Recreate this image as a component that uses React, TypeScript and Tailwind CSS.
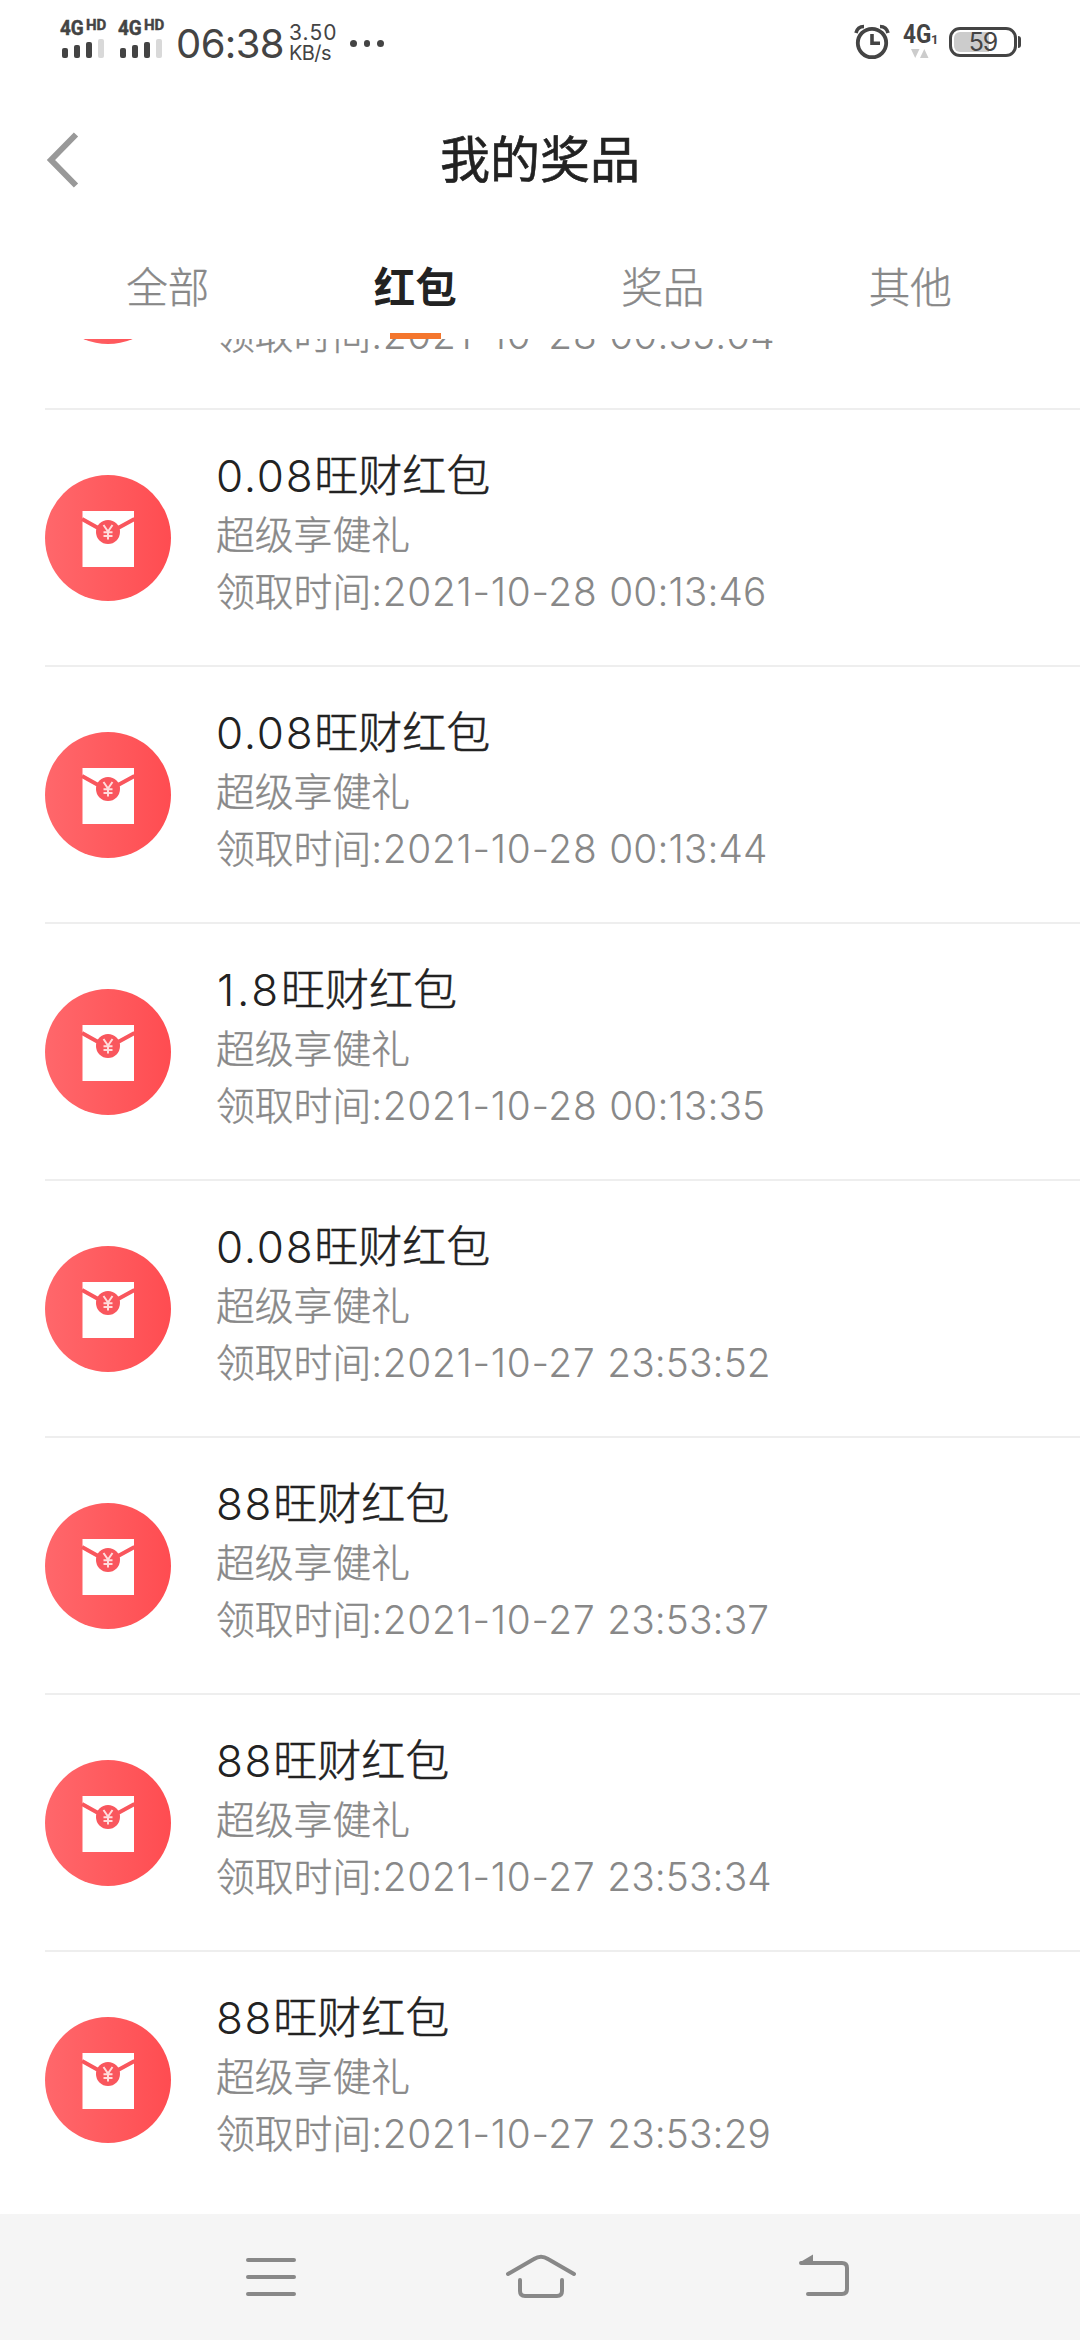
type Prize = { amount: string; date: string; time: string };

const prizes: Prize[] = [
  { amount: "0.08", date: "2021-10-28", time: "00:35:04" },
  { amount: "0.08", date: "2021-10-28", time: "00:13:46" },
  { amount: "0.08", date: "2021-10-28", time: "00:13:44" },
  { amount: "1.8", date: "2021-10-28", time: "00:13:35" },
  { amount: "0.08", date: "2021-10-27", time: "23:53:52" },
  { amount: "88", date: "2021-10-27", time: "23:53:37" },
  { amount: "88", date: "2021-10-27", time: "23:53:34" },
  { amount: "88", date: "2021-10-27", time: "23:53:29" },
];

const tabs = ["全部", "红包", "奖品", "其他"];

function Signal() {
  return (
    <div className="flex h-[38px] w-[46px] flex-col justify-between">
      <div className="flex h-[16px] items-start gap-[2px] whitespace-nowrap font-bold text-[#444]">
        <span className="w-[24px] origin-left scale-x-[.9] font-['Roboto'] text-[21px] leading-[17px] [-webkit-text-stroke:0.5px]">4G</span>
        <span className="font-['Roboto'] text-[15px] leading-[11px] [-webkit-text-stroke:0.4px]">HD</span>
      </div>
      <div className="flex items-end gap-[6px] pl-[2px]">
        <i className="h-[10px] w-[6px] rounded-[2px] bg-[#444]" />
        <i className="h-[13px] w-[6px] rounded-[2px] bg-[#444]" />
        <i className="h-[16px] w-[6px] rounded-[2px] bg-[#444]" />
        <i className="h-[19px] w-[6px] rounded-[2px] bg-[#d9d9d9]" />
      </div>
    </div>
  );
}

function StatusBar() {
  return (
    <div className="flex h-[84px] items-start pl-[60px] text-[#444]">
      <div className="flex gap-[12px] pt-[20px]">
        <Signal />
        <Signal />
      </div>
      <span className="ml-[12px] mt-[24px] w-[113px] whitespace-nowrap text-[40px] leading-[40px] tracking-[-0.6px]">06:38</span>
      <div className="mt-[23px] w-[61px] whitespace-nowrap text-[20px] leading-[20px]">
        <div className="text-[21px] tracking-[1.1px]">3.50</div>
        <div className="tracking-[-0.6px]">KB/s</div>
      </div>
      <div className="mt-[40px] flex gap-[7px]">
        <i className="size-[6.5px] rounded-full bg-[#444]" />
        <i className="size-[6.5px] rounded-full bg-[#444]" />
        <i className="size-[6.5px] rounded-full bg-[#444]" />
      </div>
      <svg className="ml-auto mt-[24px] h-[36px] w-[36px]" viewBox="0 0 36 36" fill="none" stroke="#444">
        <circle cx="18" cy="19" r="14.2" strokeWidth="3.8" />
        <path d="M18 10v9.2h8" strokeWidth="3.6" />
        <path d="M2 9Q3.500 2.500 10 2.500M34 9Q32.500 2.500 26 2.500" strokeWidth="3.600" />
      </svg>
      <div className="ml-[13px] mt-[26px] w-[41px]">
        <div className="flex items-end text-[#444]">
          <span className="w-[28px] origin-left scale-x-[.9] whitespace-nowrap font-['Roboto'] text-[25px] font-bold leading-[18px]">4G</span>
          <span className="font-['Roboto'] text-[13px] font-bold leading-[9px]">1</span>
        </div>
        <svg className="ml-[8px] mt-[5px] h-[9px] w-[18px]" viewBox="0 0 18 9" fill="#ccc">
          <path d="M0 0h8.500L4.200 9zM9 9h8.500L13.300 0z" />
        </svg>
      </div>
      <div className="ml-[5px] mr-[59px] mt-[27px] flex items-center">
        <div className="flex h-[30px] w-[68px] items-center justify-center rounded-[11px] border-[3px] border-[#444] bg-[linear-gradient(90deg,#ccc_37px,transparent_37px)] bg-clip-content p-[2px] text-[25px] leading-[20px] tracking-[-1px]">
          59
        </div>
        <i className="ml-[1px] h-[12px] w-[3px] rounded-r-[3px] bg-[#444]" />
      </div>
    </div>
  );
}

function PacketIcon() {
  return (
    <div className="mt-[65px] flex size-[126px] shrink-0 items-center justify-center rounded-full bg-gradient-to-r from-[#ff676b] to-[#ff4c51]">
      <svg className="size-[126px]" viewBox="0 0 126 126">
        <path d="M37.500 36h51.500v56H37.500z" fill="#fff" />
        <path d="M37 44L63 58.500L89.500 44" fill="none" stroke="#f9565d" strokeWidth="4" />
        <circle cx="63" cy="57" r="12" fill="#f9565d" />
        <path d="M58.500 50l4.500 6.500 4.500-6.500M63 56.500v8M58.500 57.200h9M58.500 61h9" fill="none" stroke="#ffdcdc" strokeWidth="2" />
      </svg>
    </div>
  );
}

function PrizeRow({ amount, date, time }: Prize) {
  return (
    <div className="ml-[45px] flex h-[257px] border-t-2 border-[#eee]">
      <PacketIcon />
      <div className="ml-[45px] whitespace-nowrap pt-[37px] font-light">
        <div className="flex h-[59px] items-center text-[44px] leading-[59px] text-[#222]">
          <span className={amount.startsWith("1") ? "ml-px tracking-[2.8px]" : "tracking-[1.7px]"}>{amount}</span>
          <span className="[-webkit-text-stroke:0.5px]">旺财红包</span>
        </div>
        <div className="h-[57px] text-[38.8px] leading-[57px] text-[#888] [-webkit-text-stroke:0.4px]">超级享健礼</div>
        <div className="flex h-[57px] items-center text-[38.8px] leading-[57px] text-[#888]">
          <span className="[-webkit-text-stroke:0.4px]">领取时间</span>
          <span className="tracking-[0.7px]">:{date}</span>
          <span className="ml-[12px] tracking-[0.1px]">{time}</span>
        </div>
      </div>
    </div>
  );
}

export default function App() {
  return (
    <div className="flex h-[2340px] w-[1080px] flex-col overflow-hidden bg-white font-['Inter','Noto_Sans_CJK_SC',sans-serif]">
      <StatusBar />
      <header className="grid h-[152px] grid-cols-[120px_1fr_120px] items-center">
        <svg className="ml-[46px] h-[56px] w-[36px]" viewBox="0 0 36 56" fill="none" stroke="#999" strokeWidth="6">
          <path d="M30 2.500L5 28L30 53.500" />
        </svg>
        <h1 className="text-center text-[50px] leading-[60px] text-[#222] [-webkit-text-stroke:0.6px]">我的奖品</h1>
      </header>
      <nav className="ml-[44px] mr-[46px] grid h-[103px] shrink-0 grid-cols-4">
        {tabs.map((tab) => (
          <div
            key={tab}
            className={
              tab === "红包"
                ? "flex flex-col items-center justify-between pt-[22px] text-[41.5px] font-bold leading-[60px] text-[#222]"
                : "flex flex-col items-center pt-[22px] text-[41.5px] font-light leading-[60px] text-[#888] [-webkit-text-stroke:0.4px]"
            }
          >
            {tab}
            {tab === "红包" && <i className="h-[6px] w-[51px] bg-[#f4762d]" />}
          </div>
        ))}
      </nav>
      <main className="flex h-[1875px] shrink-0 flex-col overflow-hidden">
        <div className="-mt-[188px]">
          {prizes.map((p) => (
            <PrizeRow key={p.date + p.time} {...p} />
          ))}
        </div>
      </main>
      <footer className="flex h-[126px] shrink-0 items-center justify-between bg-[#f5f5f5] pl-[243px] pr-[226px]">
        <svg className="h-[50px] w-[56px]" viewBox="0 0 56 50" fill="none" stroke="#888" strokeWidth="4" strokeLinecap="round">
          <path d="M5 8h46M5 25h46M5 42h46" />
        </svg>
        <svg className="mr-[15px] h-[50px] w-[76px]" viewBox="0 0 76 50" fill="none" stroke="#888" strokeWidth="4" strokeLinecap="round">
          <path d="M5 22L31 7Q38 2.500 45 7L71 22" />
          <path d="M17 28V39Q17 44 22 44H54Q59 44 59 39V28" />
        </svg>
        <svg className="h-[50px] w-[56px]" viewBox="0 0 56 50" fill="none" stroke="#888" strokeWidth="4" strokeLinecap="round">
          <path d="M3 11H44Q49 11 49 16V37Q49 42 44 42H10" />
          <path d="M1.500 10.500L15 2.500V12z" fill="#888" stroke="none" />
        </svg>
      </footer>
    </div>
  );
}
